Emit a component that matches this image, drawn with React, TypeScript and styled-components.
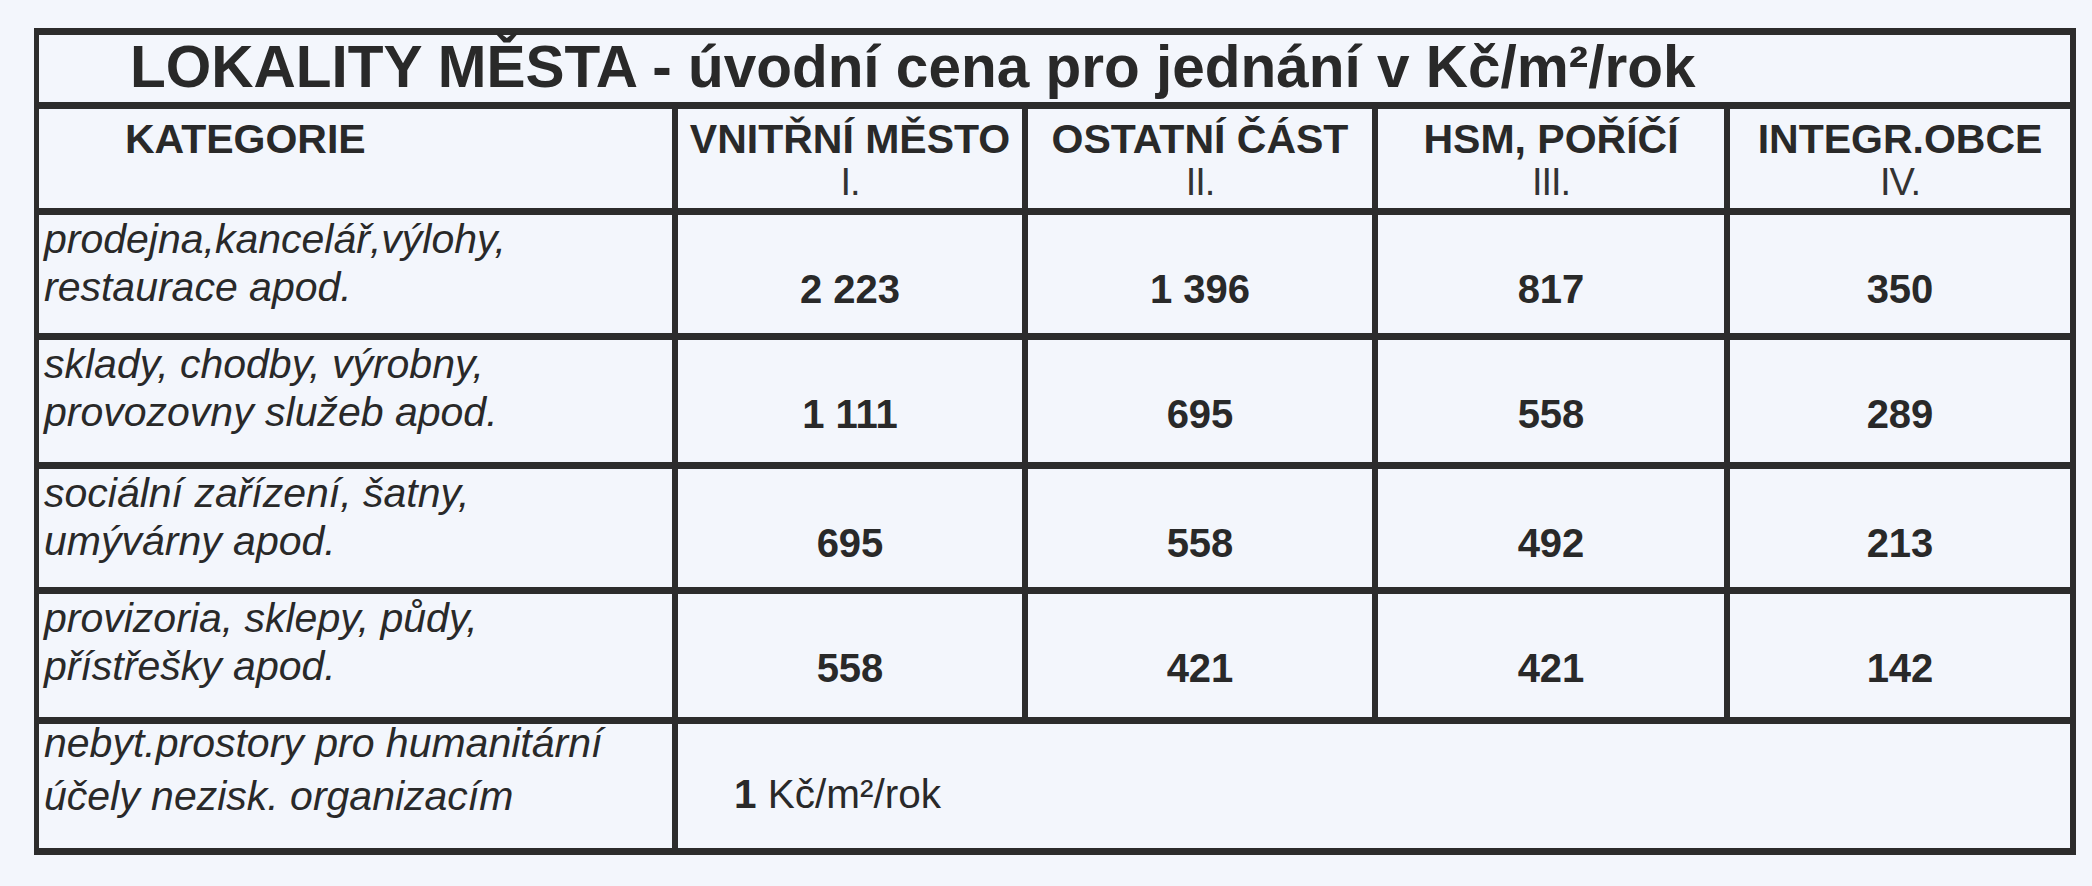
import React from "react";
import styled, { createGlobalStyle } from "styled-components";

const GlobalStyle = createGlobalStyle`
  html, body {
    margin: 0;
    padding: 0;
    background: #f3f6fc;
  }
  body {
    font-family: "Liberation Sans", Arial, sans-serif;
    color: #292929;
  }
`;

const Page = styled.div`
  box-sizing: border-box;
  width: 2092px;
  height: 886px;
  padding: 28px 0 0 34px;
  overflow: hidden;
`;

const Table = styled.div`
  box-sizing: border-box;
  display: grid;
  width: 2042px;
  grid-template-columns: 633px 344px 344px 346px 340px;
  grid-template-rows: 67px 99px 118px 122px 118px 123px 124px;
  column-gap: 6px;
  row-gap: 7px;
  padding: 7px 6px 7px 5px;
  background: #2c2c2c;
`;

const Cell = styled.div<{ $span?: number }>`
  background: #f3f6fc;
  grid-column: span ${(p) => p.$span ?? 1};
  min-width: 0;
`;

const TitleCell = styled(Cell)`
  padding: 3px 0 0 91px;
  font-size: 58.5px;
  font-weight: 700;
  line-height: 1;
  white-space: nowrap;
`;

const HeaderCell = styled(Cell)<{ $left?: boolean }>`
  padding: 10px 0 0 ${(p) => (p.$left ? "86px" : "0")};
  text-align: ${(p) => (p.$left ? "left" : "center")};
`;

const HeadMain = styled.div`
  font-size: 41px;
  font-weight: 700;
  line-height: 41px;
  white-space: nowrap;
`;

const HeadSub = styled.div`
  margin-top: 3px;
  font-family: "Liberation Sans Narrow", "Liberation Sans", Arial, sans-serif;
  font-size: 38px;
  font-weight: 400;
  line-height: 38px;
  letter-spacing: -1px;
  color: #333;
`;

const CategoryCell = styled(Cell)`
  padding-left: 5px;
  font-size: 41px;
  font-style: italic;
  white-space: nowrap;
`;

const CategoryLine = styled.div<{ $lh: number; $gap?: number }>`
  line-height: ${(p) => p.$lh}px;
  margin-top: ${(p) => p.$gap ?? 0}px;
`;

const ValueCell = styled(Cell)`
  padding-top: 50px;
  font-size: 40px;
  font-weight: 700;
  line-height: 48px;
  text-align: center;
  white-space: nowrap;
`;

const NoteCell = styled(Cell)`
  padding: 46px 0 0 56px;
  font-size: 40.5px;
  line-height: 48px;
  white-space: nowrap;
`;

const Strong = styled.b`
  font-weight: 700;
`;

const columns = [
  { name: "VNITŘNÍ MĚSTO", roman: "I." },
  { name: "OSTATNÍ ČÁST", roman: "II." },
  { name: "HSM, POŘÍČÍ", roman: "III." },
  { name: "INTEGR.OBCE", roman: "IV." },
];

const rows = [
  {
    cat: ["prodejna,kancelář,výlohy,", "restaurace apod."],
    vals: ["2 223", "1 396", "817", "350"],
  },
  {
    cat: ["sklady, chodby, výrobny,", "provozovny služeb apod."],
    vals: ["1 111", "695", "558", "289"],
  },
  {
    cat: ["sociální zařízení, šatny,", "umývárny apod."],
    vals: ["695", "558", "492", "213"],
  },
  {
    cat: ["provizoria, sklepy, půdy,", "přístřešky apod."],
    vals: ["558", "421", "421", "142"],
  },
];

export default function App() {
  return (
    <>
      <GlobalStyle />
      <Page>
        <Table>
          <TitleCell $span={5}>
            LOKALITY MĚSTA - úvodní cena pro jednání v Kč/m²/rok
          </TitleCell>

          <HeaderCell $left>
            <HeadMain>KATEGORIE</HeadMain>
          </HeaderCell>
          {columns.map((c) => (
            <HeaderCell key={c.name}>
              <HeadMain>{c.name}</HeadMain>
              <HeadSub>{c.roman}</HeadSub>
            </HeaderCell>
          ))}

          {rows.map((r) => (
            <React.Fragment key={r.cat[0]}>
              <CategoryCell>
                {r.cat.map((line) => (
                  <CategoryLine key={line} $lh={48}>
                    {line}
                  </CategoryLine>
                ))}
              </CategoryCell>
              {r.vals.map((v, i) => (
                <ValueCell key={i}>{v}</ValueCell>
              ))}
            </React.Fragment>
          ))}

          <CategoryCell>
            <CategoryLine $lh={38}>nebyt.prostory pro humanitární</CategoryLine>
            <CategoryLine $lh={38} $gap={15}>
              účely nezisk. organizacím
            </CategoryLine>
          </CategoryCell>
          <NoteCell $span={4}>
            <Strong>1</Strong> Kč/m²/rok
          </NoteCell>
        </Table>
      </Page>
    </>
  );
}
